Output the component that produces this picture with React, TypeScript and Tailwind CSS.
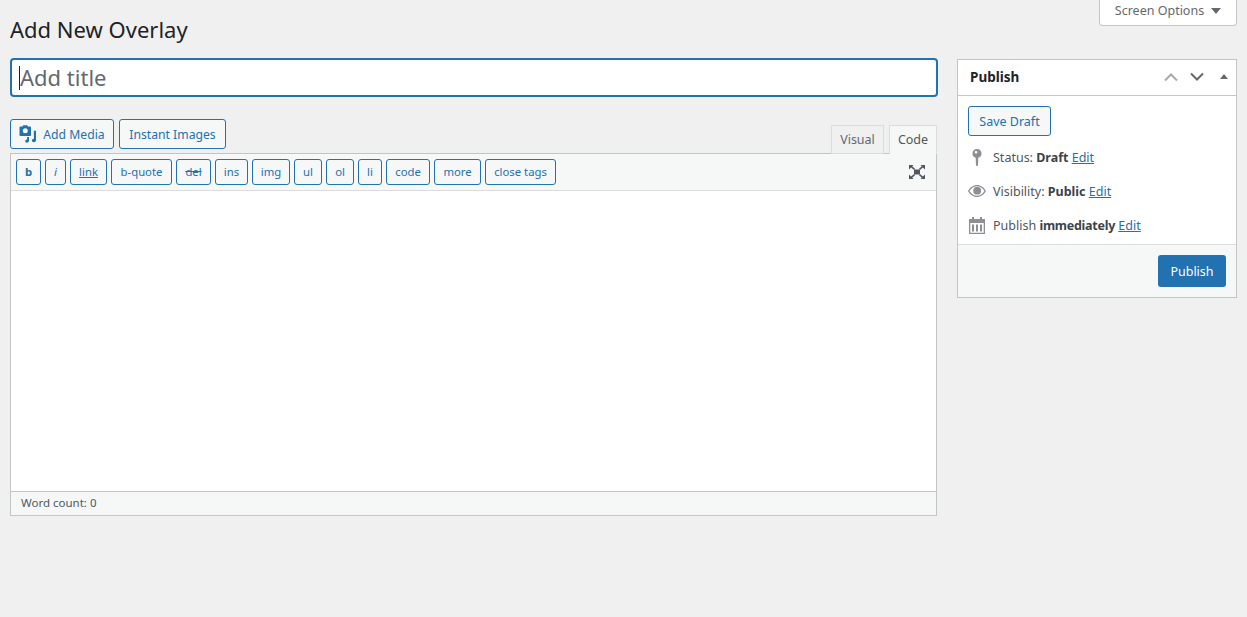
import React from 'react';

const quicktags = [
  { label: 'b', width: 'w-[25px]', extra: 'font-bold' },
  { label: 'i', width: 'w-[21px]', extra: 'italic' },
  { label: 'link', width: 'w-[37px]', extra: 'underline' },
  { label: 'b-quote', width: 'w-[61px]', extra: '' },
  { label: 'del', width: 'w-[35px]', extra: 'line-through' },
  { label: 'ins', width: 'w-[33px]', extra: '' },
  { label: 'img', width: 'w-[38px]', extra: '' },
  { label: 'ul', width: 'w-[28px]', extra: '' },
  { label: 'ol', width: 'w-[28px]', extra: '' },
  { label: 'li', width: 'w-[24px]', extra: '' },
  { label: 'code', width: 'w-[44px]', extra: '' },
  { label: 'more', width: 'w-[47px]', extra: '' },
  { label: 'close tags', width: 'w-[71px]', extra: '' },
];

function MediaIcon() {
  return (
    <svg width="18" height="18" viewBox="0 0 18 18" fill="#2271b1">
      <path fillRule="evenodd" d="M1.500 1.500h2l.8-1.200h3.900l.8 1.200h2c.6 0 1 .4 1 1v7.500c0 .6-.4 1-1 1h-9.500c-.6 0-1-.4-1-1V2.500c0-.6.4-1 1-1zM6.300 3.300a2.500 2.500 0 1 0 0 5 2.500 2.500 0 0 0 0-5z" />
      <path d="M14.800 5.800h2.200v9.200c0 1.300-1 2.300-2.200 2.300-1.100 0-1.900-.7-1.900-1.700s.9-1.800 2-1.800l-.1-8z" />
      <path d="M10 12v3.800c0 1-.8 1.900-2 1.900-1 0-1.800-.7-1.800-1.600 0-1 .9-1.700 2-1.700l-.1-2.400h1.900z" />
    </svg>
  );
}

function PinIcon() {
  return (
    <svg width="10" height="17" viewBox="0 0 10 17" fill="#8c8f94">
      <path fillRule="evenodd" d="M5 0a4.500 4.500 0 0 1 1.300 8.800L6 16.200c0 .5-.4.800-1 .8s-1-.3-1-.8l-.3-7.400A4.500 4.500 0 0 1 5 0zM4 2a1.300 1.300 0 1 0 0 2.600A1.300 1.300 0 0 0 4 2z" />
    </svg>
  );
}

function EyeIcon() {
  return (
    <svg width="18" height="12" viewBox="0 0 18 12" fill="#8c8f94">
      <path fillRule="evenodd" d="M9 0c3.800 0 7 2.400 9 6-2 3.600-5.200 6-9 6s-7-2.400-9-6c2-3.600 5.200-6 9-6zm0 1.300C6 1.300 3.300 3 1.500 6 3.300 9 6 10.700 9 10.700S14.700 9 16.500 6C14.700 3 12 1.300 9 1.300z" />
      <circle cx="9.200" cy="5.700" r="3.900" />
    </svg>
  );
}

function CalendarIcon() {
  return (
    <svg width="16" height="17" viewBox="0 0 16 17" fill="#8c8f94">
      <path fillRule="evenodd" d="M3 0h2v2h6V0h2v2h3v15H0V2h3V0zM1.300 6v9.700h13.400V6H1.300z" />
      <path d="M3 7.500h2v7H3zM7 7.500h2v7H7zM11 7.500h2v7h-2z" />
    </svg>
  );
}

function FullscreenIcon() {
  return (
    <svg width="18" height="16" viewBox="0 0 18 16" fill="#50575e">
      <path d="M1 1h4.500L4.200 2.300 7 4.800 6 6 3.200 3.500 1 5.500zM17 1h-4.500l1.300 1.300L11 4.800 12 6l2.800-2.500L17 5.500zM1 15h4.500l-1.300-1.300L7 11.200 6 10l-2.800 2.500L1 10.500zM17 15h-4.500l1.300-1.300-2.800-2.500 1-1.200 2.800 2.500 2.200-2z" />
      <rect x="6" y="5.500" width="6" height="5" />
    </svg>
  );
}

function Chevron({ up, color }: { up?: boolean; color: string }) {
  return (
    <svg width="16" height="10" viewBox="0 0 16 10" fill="none" stroke={color} strokeWidth="2">
      <path d={up ? 'M2 8.500l6-6 6 6' : 'M2 1.500l6 6 6-6'} />
    </svg>
  );
}

function MetaRow({ icon, children }: { icon: React.ReactNode; children: React.ReactNode }) {
  return (
    <div className="flex h-[34px] items-center">
      <div className="flex w-[25px] justify-center pr-[7px]">{icon}</div>
      <div className="whitespace-nowrap pt-[2px] text-[#50575e]">{children}</div>
    </div>
  );
}

export default function App() {
  return (
    <div className="min-h-[617px] bg-[#f0f0f1] px-[10px] font-['Noto_Sans',sans-serif] text-[12.5px] leading-[20px] text-[#3c434a]">
      <div className="flex h-[58px] items-start justify-between">
        <h1 className="pt-[13px] text-[22px] leading-[33px] text-[#1d2327]">Add New Overlay</h1>
        <button className="flex h-[26px] w-[138px] items-center justify-center gap-[7px] rounded-b-[4px] border border-t-0 border-[#c3c4c7] bg-white pb-[4px] text-[#646970]">
          Screen Options
          <span className="h-0 w-0 border-x-[5px] border-t-[6px] border-x-transparent border-t-[#646970]" />
        </button>
      </div>

      <div className="flex items-start gap-[19px]">
        <div className="w-[928px]">
          <div className="flex h-[39px] items-center rounded-[4px] border-2 border-[#2271b1] bg-white pl-[7px] text-[22px] text-[#646970]">
            <span className="h-[24px] w-px bg-[#1d2327]" />
            <span className="-mt-[2px]">Add title</span>
          </div>

          <div className="mr-px mt-[22px] flex h-[35px] items-start justify-between">
            <div className="flex gap-[5px]">
              <button className="flex h-[30px] w-[104px] items-center justify-center gap-[6px] rounded-[3px] border border-[#2271b1] bg-[#f6f7f7] text-[12.2px] text-[#2271b1]">
                <MediaIcon />
                <span className="pt-[2px]">Add Media</span>
              </button>
              <button className="h-[30px] w-[107px] rounded-[3px] border border-[#2271b1] bg-[#f6f7f7] pt-[2px] text-[12.2px] text-[#2271b1]">
                Instant Images
              </button>
            </div>
            <div className="flex items-end gap-[5px] self-end">
              <div className="flex h-[29px] w-[53px] items-center justify-center border border-[#dcdcde] bg-[#f0f0f1] text-[#646970]">Visual</div>
              <div className="z-10 flex h-[29px] w-[48px] items-center justify-center border border-b-0 border-[#dcdcde] bg-[#f6f7f7] text-[#50575e]">Code</div>
            </div>
          </div>

          <div className="-mt-px mr-px border border-[#c3c4c7] bg-white">
            <div className="flex h-[37px] items-center justify-between border-b border-[#dcdcde] bg-[#f6f7f7] pl-[5px] pr-[10px]">
              <div className="flex gap-[4px]">
                {quicktags.map((tag) => (
                  <button
                    key={tag.label}
                    className={`h-[26px] rounded-[3px] border border-[#2271b1] bg-[#f6f7f7] text-[11.3px] leading-[24px] text-[#2271b1] ${tag.width} ${tag.extra}`}
                  >
                    {tag.label}
                  </button>
                ))}
              </div>
              <FullscreenIcon />
            </div>
            <div className="h-[300px] bg-white" />
            <div className="flex h-[24px] items-center border-t border-[#c3c4c7] bg-[#f6f7f7] pb-px pl-[10px] text-[11.5px] text-[#50575e]">
              Word count: 0
            </div>
          </div>
        </div>

        <div className="mt-px w-[280px] border border-[#c3c4c7] bg-white">
          <div className="flex h-[36px] items-center justify-between border-b border-[#c3c4c7] pb-[2px] pl-[12px] pr-[8px]">
            <h2 className="text-[13.5px] font-bold text-[#1d2327]">Publish</h2>
            <div className="flex items-center gap-[10px]">
              <Chevron up color="#a7aaad" />
              <Chevron color="#646970" />
              <span className="ml-[5px] h-0 w-0 border-x-[4px] border-b-[5px] border-x-transparent border-b-[#646970]" />
            </div>
          </div>
          <div className="px-[10px] pb-[2px] pt-[10px]">
            <button className="h-[30px] w-[83px] rounded-[3px] border border-[#2271b1] bg-[#f6f7f7] pt-[2px] text-[#2271b1]">Save Draft</button>
            <div className="mt-[4px]">
              <MetaRow icon={<PinIcon />}>
                Status: <b className="text-[#3c434a]">Draft</b> <a className="text-[#2271b1] underline">Edit</a>
              </MetaRow>
              <MetaRow icon={<EyeIcon />}>
                Visibility: <b className="text-[#3c434a]">Public</b> <a className="text-[#2271b1] underline">Edit</a>
              </MetaRow>
              <MetaRow icon={<CalendarIcon />}>
                Publish <b className="tracking-[-0.25px] text-[#3c434a]">immediately</b> <a className="text-[#2271b1] underline">Edit</a>
              </MetaRow>
            </div>
          </div>
          <div className="flex h-[53px] items-center justify-end border-t border-[#dcdcde] bg-[#f6f7f7] pr-[10px]">
            <button className="h-[32px] w-[68px] rounded-[3px] bg-[#2271b1] pt-[2px] text-white">Publish</button>
          </div>
        </div>
      </div>
    </div>
  );
}
